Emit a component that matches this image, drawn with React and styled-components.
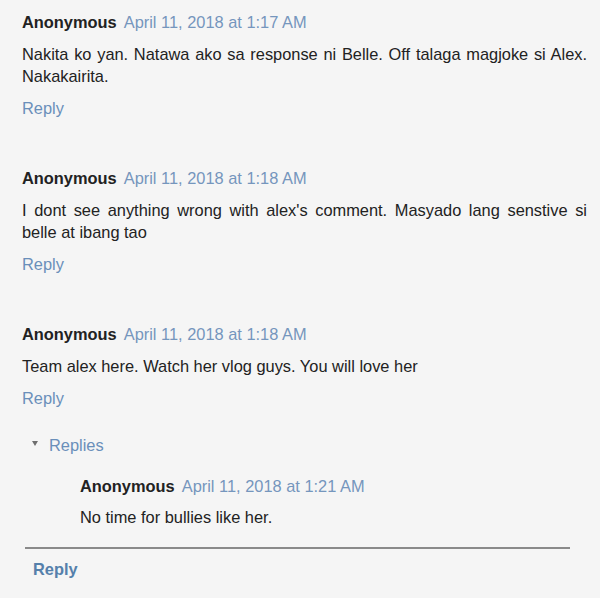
import React from 'react'
import styled, { createGlobalStyle } from 'styled-components'

const GlobalStyle = createGlobalStyle`
  html, body {
    margin: 0;
    padding: 0;
    background: #f5f5f5;
  }
  body {
    font-family: "Liberation Sans", Arial, sans-serif;
    font-size: 16.4px;
    color: #222;
  }
`

const Page = styled.div`
  padding: 11px 13px 20px 22px;
  width: 565px;
`

const CommentBlock = styled.div`
  margin-bottom: ${p => p.$last ? '0' : '48px'};
`

const Header = styled.div`
  display: flex;
  gap: 7px;
  line-height: 22px;
  margin-bottom: ${p => p.$tight ? '9px' : '10px'};
`

const Author = styled.span`
  font-weight: bold;
  color: #222;
`

const DateLink = styled.a`
  color: #7596bd;
  text-decoration: none;
`

const Body = styled.p`
  margin: 0;
  line-height: 22px;
  text-align: justify;
`

const ReplyLink = styled.a`
  display: inline-block;
  margin-top: 10px;
  line-height: 22px;
  color: #6a8fba;
  text-decoration: none;
`

const Thread = styled.div`
  margin: 25px 17px 0 3px;
`

const Toggle = styled.div`
  display: flex;
  align-items: center;
  padding-left: 7px;
  line-height: 22px;
  color: #6a8fba;
`

const Arrow = styled.span`
  width: 0;
  height: 0;
  border-left: 3.5px solid transparent;
  border-right: 3.5px solid transparent;
  border-top: 5px solid #6f6f6f;
  margin-right: 11px;
  margin-top: -3px;
`

const Replies = styled.div`
  padding-left: 55px;
  margin-top: 19px;
  padding-bottom: 19px;
  border-bottom: 2px solid #8a8a8a;
`

const ThreadReply = styled.a`
  display: inline-block;
  margin: 9px 0 0 8px;
  line-height: 22px;
  font-weight: bold;
  color: #5580ab;
  text-decoration: none;
`

const comments = [
  {
    date: 'April 11, 2018 at 1:17 AM',
    text: 'Nakita ko yan. Natawa ako sa response ni Belle. Off talaga magjoke si Alex. Nakakairita.'
  },
  {
    date: 'April 11, 2018 at 1:18 AM',
    text: "I dont see anything wrong with alex's comment. Masyado lang senstive si belle at ibang tao"
  },
  {
    date: 'April 11, 2018 at 1:18 AM',
    text: 'Team alex here. Watch her vlog guys. You will love her'
  }
]

const App = () => {
  return (
    <Page>
      <GlobalStyle />
      {comments.map((c, i) => (
        <CommentBlock key={i} $last={i === comments.length - 1}>
          <Header>
            <Author>Anonymous</Author>
            <DateLink href="#">{c.date}</DateLink>
          </Header>
          <Body>{c.text}</Body>
          <ReplyLink href="#">Reply</ReplyLink>
        </CommentBlock>
      ))}
      <Thread>
        <Toggle>
          <Arrow />
          Replies
        </Toggle>
        <Replies>
          <Header $tight>
            <Author>Anonymous</Author>
            <DateLink href="#">April 11, 2018 at 1:21 AM</DateLink>
          </Header>
          <Body>No time for bullies like her.</Body>
        </Replies>
        <ThreadReply href="#">Reply</ThreadReply>
      </Thread>
    </Page>
  )
}

export default App
